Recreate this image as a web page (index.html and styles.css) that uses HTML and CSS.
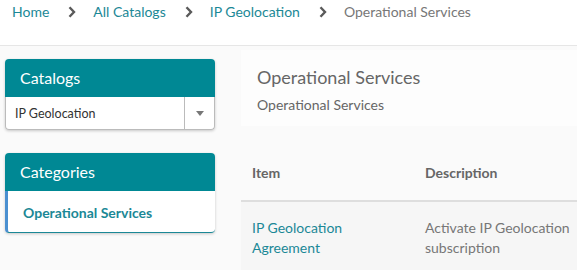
FILE: index.html
```html
<!DOCTYPE html>
<html lang="en">
<head>
    <meta charset="UTF-8">
    <title>Operational Services</title>
    <link rel="stylesheet" href="styles.css">
</head>
<body>
    <nav class="breadcrumb">
        <a href="#">Home</a>
        <svg class="sep" width="8" height="12" viewBox="0 0 8 12"><path d="M1.5 1.2L6 6l-4.5 4.8" fill="none" stroke="#5a5a5a" stroke-width="2.4"/></svg>
        <a href="#">All Catalogs</a>
        <svg class="sep" width="8" height="12" viewBox="0 0 8 12"><path d="M1.5 1.2L6 6l-4.5 4.8" fill="none" stroke="#5a5a5a" stroke-width="2.4"/></svg>
        <a href="#">IP Geolocation</a>
        <svg class="sep" width="8" height="12" viewBox="0 0 8 12"><path d="M1.5 1.2L6 6l-4.5 4.8" fill="none" stroke="#5a5a5a" stroke-width="2.4"/></svg>
        <span class="current">Operational Services</span>
    </nav>

    <div class="layout">
        <aside class="sidebar">
            <div class="panel">
                <div class="panel-head">Catalogs</div>
                <div class="select">
                    <span class="select-value">IP Geolocation</span>
                    <span class="select-arrow">
                        <svg width="8" height="5" viewBox="0 0 8 5"><path d="M0 0h8L4 5z" fill="#777"/></svg>
                    </span>
                </div>
            </div>

            <div class="panel">
                <div class="panel-head">Categories</div>
                <div class="category active">Operational Services</div>
            </div>
        </aside>

        <main class="content">
            <div class="content-head">
                <h1>Operational Services</h1>
                <p>Operational Services</p>
            </div>
            <table class="items">
                <thead>
                    <tr>
                        <th class="col-item">Item</th>
                        <th class="col-desc">Description</th>
                    </tr>
                </thead>
                <tbody>
                    <tr>
                        <td><a href="#">IP Geolocation Agreement</a></td>
                        <td>Activate IP Geolocation subscription</td>
                    </tr>
                </tbody>
            </table>
        </main>
    </div>
</body>
</html>
```

FILE: styles.css
```css
body {
    margin: 0;
    font-family: Lato, "Open Sans", Arial, sans-serif;
    background: #fafafa;
    color: #666;
    overflow: hidden;
}
a {
    color: #1b8896;
    text-decoration: none;
}
.breadcrumb {
    background: #fff;
    border-bottom: 1px solid #e6e6e6;
    height: 46px;
    padding: 3px 0 0 12px;
    box-sizing: border-box;
    font-size: 14px;
    display: flex;
    align-items: flex-start;
    line-height: 18px;
}
.breadcrumb .sep {
    margin: 3px 17px 0 19px;
    flex: none;
}
.breadcrumb .current {
    color: #777;
}
.layout {
    display: flex;
    padding-top: 13px;
}
.sidebar {
    width: 210px;
    flex: none;
    margin: 0 26px 0 5px;
}
.panel {
    background: #fff;
    border-radius: 4px;
    box-shadow: 0 1px 3px rgba(0, 0, 0, 0.2);
    margin-bottom: 23px;
}
.panel-head {
    background: #008894;
    color: #fff;
    font-size: 16px;
    height: 38px;
    line-height: 37px;
    padding-left: 15px;
    border-radius: 4px 4px 0 0;
}
.select {
    display: flex;
    height: 33px;
    border: 1px solid #bbb;
    border-top: none;
    border-radius: 0 0 4px 4px;
    font-size: 12.5px;
    color: #333;
    box-sizing: border-box;
}
.select-value {
    flex: 1;
    padding-left: 9px;
    line-height: 33px;
}
.select-arrow {
    width: 29px;
    border-left: 1px solid #bbb;
    display: flex;
    align-items: center;
    justify-content: center;
}
.category {
    height: 41px;
    line-height: 43px;
    padding-left: 15px;
    font-size: 14px;
    font-weight: bold;
    color: #1b8896;
    border-left: 3px solid #4a8fd0;
    border-bottom: 1px solid #1b8896;
    border-radius: 0 0 4px 4px;
}
.content {
    flex: 1;
    min-width: 0;
    overflow: hidden;
    margin-top: -9px;
}
.content-head {
    background: #fdfdfd;
    padding: 15px 16px 0;
    height: 76px;
    box-sizing: border-box;
}
.content-head h1 {
    margin: 0;
    font-size: 18px;
    font-weight: normal;
    color: #666;
    line-height: 24px;
}
.content-head p {
    margin: 7px 0 0;
    font-size: 14px;
    color: #666;
}
.items {
    width: 420px;
    table-layout: fixed;
    border-collapse: collapse;
    font-size: 14px;
}
.items th {
    text-align: left;
    font-weight: bold;
    color: #666;
    height: 75px;
    padding: 19px 0 0 0;
    box-sizing: border-box;
    border-bottom: 2px solid #dedede;
}
.items .col-item {
    width: 184px;
}
.items th.col-item,
.items td:first-child {
    padding-left: 11px;
}
.items td {
    background: #f6f6f6;
    vertical-align: top;
    padding: 16px 40px 20px 0;
    line-height: 20px;
    color: #777;
}
.items td:last-child {
    padding-right: 80px;
}
```
